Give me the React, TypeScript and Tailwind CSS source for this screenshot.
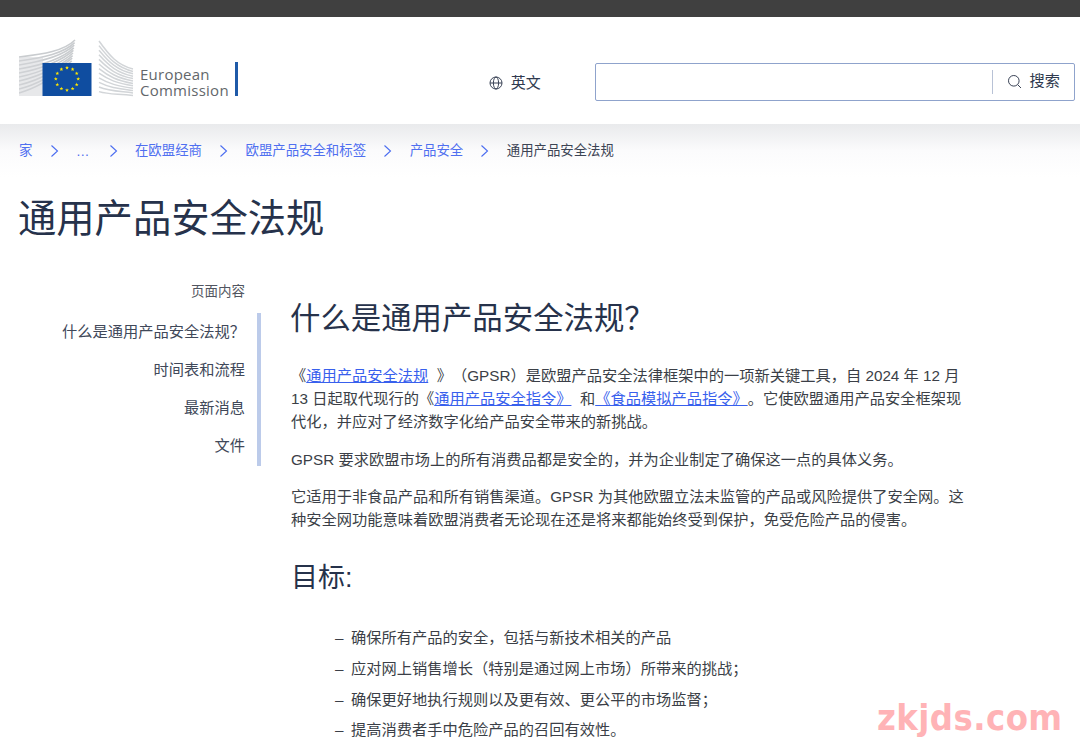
const font = "font-['Liberation_Sans','Noto_Sans_CJK_SC',sans-serif] [text-spacing-trim:space-all]";

const stars = Array.from({ length: 12 }, (_, i) => {
  const a = (i * Math.PI) / 6;
  return { x: 23 + 11.2 * Math.sin(a), y: 17 - 11.2 * Math.cos(a) };
});

function starPoints(cx: number, cy: number, r: number) {
  const pts: string[] = [];
  for (let i = 0; i < 10; i++) {
    const rad = i % 2 === 0 ? r : r * 0.42;
    const a = (i * Math.PI) / 5;
    pts.push(`${cx + rad * Math.sin(a)},${cy - rad * Math.cos(a)}`);
  }
  return pts.join(" ");
}

function Logo() {
  return (
    <svg width="120" height="60" viewBox="0 0 120 60" className="shrink-0">
      {/* left wing */}
      {[0, 1, 2, 3, 4, 5, 6, 7, 8, 9].map((i) => (
        <path
          key={i}
          d={`M0 ${18 + i * 4} C 25 ${15 + i * 3.6}, 45 ${12 + i * 2}, ${56 - i * 0.4} ${1 + i * 2.6}`}
          fill="none"
          stroke="#c9cccf"
          strokeWidth="1.6"
        />
      ))}
      <rect x="0" y="18" width="24" height="39" fill="#d4d6d8" opacity="0.55" />
      {/* right wing */}
      {[0, 1, 2, 3, 4, 5, 6, 7, 8, 9, 10, 11].map((i) => (
        <path
          key={i}
          d={`M80 ${2 + i * 4.6} C 90 ${16 + i * 3.6}, 98 ${26 + i * 2.6}, 114 ${30 + i * 2.4}`}
          fill="none"
          stroke="#d2d5d8"
          strokeWidth="1.5"
        />
      ))}
      <rect x="23.5" y="24" width="49" height="33" fill="#0f4da0" />
      <g transform="translate(25 23)">
        {stars.map((s, i) => (
          <polygon key={i} points={starPoints(s.x, s.y, 2)} fill="#ffe600" />
        ))}
      </g>
    </svg>
  );
}

function Chevron() {
  return (
    <svg width="9" height="14" viewBox="0 0 9 14" fill="none" stroke="#4a6cf0" strokeWidth="1.1" className="shrink-0">
      <path d="M1.5 1.5 L7.5 7 L1.5 12.5" />
    </svg>
  );
}

function Crumb({ label }: { label: string }) {
  return <a className="text-[#4f6ff0] text-[13.4px]">{label}</a>;
}

const goals = [
  "确保所有产品的安全，包括与新技术相关的产品",
  "应对网上销售增长（特别是通过网上市场）所带来的挑战；",
  "确保更好地执行规则以及更有效、更公平的市场监督；",
  "提高消费者手中危险产品的召回有效性。",
];

export default function App() {
  return (
    <div className={`${font} w-[1080px] h-[750px] overflow-hidden bg-white relative text-[#2f3a4f]`}>
      <div className="h-[17px] bg-[#404040]" />

      {/* header */}
      <header className="h-[107px] flex items-center pl-[19px] pt-[25px]">
        <div className="flex items-end mb-[28px]">
          <Logo />
          <div className="ml-[1px] text-[15px] leading-[16px] text-[#63676b] tracking-[0.25px] font-['Open_Sans',sans-serif] mb-[1px]">
            <div>European</div>
            <div>Commission</div>
          </div>
          <div className="w-[3px] h-[34px] bg-[#1f5aa8] ml-[6px] mb-[3px]" />
        </div>
        <div className="flex items-center gap-[8px] ml-[251px]">
          <svg width="14" height="14" viewBox="0 0 14 14" fill="none" stroke="#3a4356" strokeWidth="1">
            <circle cx="7" cy="7" r="6" />
            <ellipse cx="7" cy="7" rx="2.6" ry="6" />
            <path d="M1 7 H13" />
          </svg>
          <span className="text-[15px] text-[#2f3a4f]">英文</span>
        </div>
        <div className="ml-[54px] w-[480px] h-[38px] border border-[#8fa3cc] rounded-[2px] flex items-center justify-end mt-[-3px]">
          <div className="w-px h-[24px] bg-[#b8c2d6]" />
          <div className="flex items-center gap-[7px] pl-[14px] pr-[14px]">
            <svg width="15" height="15" viewBox="0 0 15 15" fill="none" stroke="#3a4356" strokeWidth="1">
              <circle cx="6.8" cy="6.8" r="5.3" />
              <path d="M10.8 10.8 L14 14" />
            </svg>
            <span className="text-[15.2px] text-[#2f3a4f]">搜索</span>
          </div>
        </div>
      </header>

      {/* breadcrumb */}
      <nav className="h-[53px] pl-[19px] flex items-center gap-[17.3px] bg-gradient-to-b from-[#e9eaec] via-[#fbfbfc] to-white pt-[1px]">
        <Crumb label="家" />
        <Chevron />
        <span className="pr-[2px]"><Crumb label="…" /></span>
        <Chevron />
        <Crumb label="在欧盟经商" />
        <Chevron />
        <Crumb label="欧盟产品安全和标签" />
        <Chevron />
        <Crumb label="产品安全" />
        <Chevron />
        <span className="text-[13.4px] text-[#3c4454]">通用产品安全法规</span>
      </nav>

      <h1 className="pl-[18px] mt-[14px] text-[38.3px] leading-[56px] text-[#26324b]">通用产品安全法规</h1>

      <div className="flex mt-[35px]">
        {/* sidebar */}
        <aside className="w-[261px] shrink-0">
          <div className="pr-[16px] text-right text-[13.5px] leading-[20px] text-[#515560] mb-[11px]">页面内容</div>
          <ul className="border-r-[4px] border-[#bccbea] pr-[12px] text-right text-[15.25px] leading-[38px] text-[#404859] h-[153px]">
            <li>什么是通用产品安全法规？</li>
            <li>时间表和流程</li>
            <li>最新消息</li>
            <li>文件</li>
          </ul>
        </aside>

        {/* content */}
        <main className="ml-[30px] w-[676px] text-[15.25px] leading-[23px] text-[#3b3f47]">
          <h2 className="-ml-[1px] text-[30.4px] leading-[44px] text-[#26324b] mt-[14px] mb-[24px]">什么是通用产品安全法规？</h2>
          <p className="mb-[14.6px]">
            《<a className="text-[#3860ed] underline">通用产品安全法规</a>&nbsp;&nbsp;》（GPSR）是欧盟产品安全法律框架中的一项新关键工具，自 2024 年 12 月 13 日起取代现行的《<a className="text-[#3860ed] underline">通用产品安全指令》</a>&nbsp;&nbsp;和<a className="text-[#3860ed] underline">《食品模拟产品指令》</a>。它使欧盟通用产品安全框架现代化，并应对了经济数字化给产品安全带来的新挑战。
          </p>
          <p className="mb-[14.6px]">GPSR 要求欧盟市场上的所有消费品都是安全的，并为企业制定了确保这一点的具体义务。</p>
          <p className="mb-[27px]">它适用于非食品产品和所有销售渠道。GPSR 为其他欧盟立法未监管的产品或风险提供了安全网。这种安全网功能意味着欧盟消费者无论现在还是将来都能始终受到保护，免受危险产品的侵害。</p>
          <h3 className="text-[27px] leading-[40px] text-[#26324b] mb-[25px]">目标:</h3>
          <ul className="pl-[44px] leading-[30.7px]">
            {goals.map((g) => (
              <li key={g} className="flex">
                <span className="w-[16px] shrink-0">–</span>
                <span>{g}</span>
              </li>
            ))}
          </ul>
        </main>
      </div>

      {/* watermark */}
      <div className="absolute left-[877px] top-[695px] text-[36px] leading-[46px] font-bold tracking-[0.5px] text-[#ffb3b6] font-['DejaVu_Sans',sans-serif] scale-x-[0.9] origin-left">
        zkjds.com
      </div>
    </div>
  );
}
